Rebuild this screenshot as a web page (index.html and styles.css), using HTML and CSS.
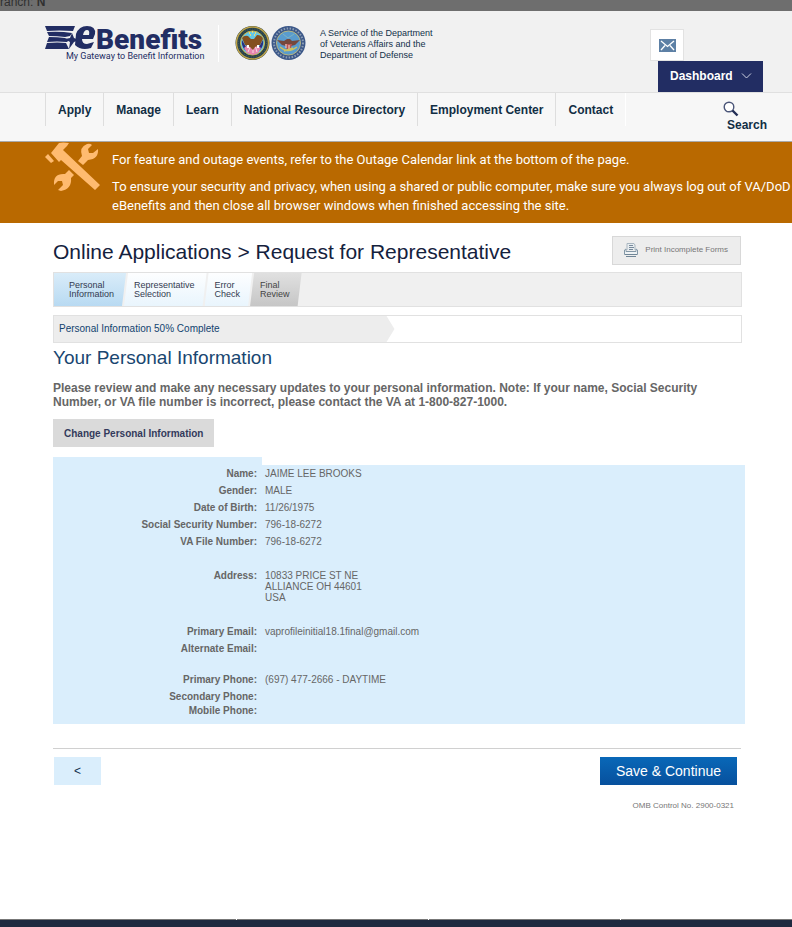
FILE: index.html
```
<!DOCTYPE html>
<html lang="en">
<head>
<meta charset="utf-8">
<title>eBenefits - Request for Representative</title>
<link rel="stylesheet" href="styles.css">
</head>
<body>
<div class="env-bar"><span>ranch: <b>N</b></span></div>
<header class="masthead">
  <a class="brand" href="#">
    <svg width="160" height="38" viewBox="0 0 160 38" role="img" aria-label="eBenefits, My Gateway to Benefit Information">
      <g fill="#222d63">
        <path d="M0 1H30L28 6Q14 5 2 6ZM2 7Q15 6 27 8L25 11L20 12Q12 11 4 11ZM4 12Q13 12 20 13L24 15L22 17Q12 16 2 17ZM2 18Q13 17 21 18L24 24H0Z"/>
        <path d="M27 8L29 13L34 15L29 17L24 24L25 17L20 14L25 13Z"/>
        <path fill-rule="evenodd" d="M30 20L31 9Q34 1 42 1Q51 1 50 9L48 14H37Q37 19 42 19L49 17L46 23Q36 26 30 20ZM38 10H44Q45 5 42 5Q39 5 38 10Z"/>
        <text class="word" x="51" y="24">Benefits</text>
        <text class="tagline" x="21" y="34">My Gateway to Benefit Information</text>
      </g>
    </svg>
  </a>
  <div class="seals">
    <svg width="35" height="36" viewBox="0 0 35 36" aria-hidden="true">
      <circle cx="17.500" cy="18" r="17" fill="#29434b"/>
      <circle cx="17.500" cy="18" r="16" fill="none" stroke="#c0a448" stroke-width="1.500"/>
      <circle cx="17.500" cy="18" r="14" fill="none" stroke="#4d6360" stroke-width="1" stroke-dasharray="1 1.500"/>
      <circle cx="17.500" cy="18" r="12" fill="#65c8e5" stroke="#d1b347"/>
      <path d="M7 15L14 27L10 25Q6 21 7 15M28 15L21 27L25 25Q29 21 28 15" fill="#282f83"/>
      <path d="M9 23L17 17L26 23L23 28L18 30L12 28Z" fill="#e785ae"/>
      <path d="M13 27L16 20M18 28V19M22 27L20 20" stroke="#f5dce3"/>
      <path d="M7 13Q9 10 13 11L16 14L19 14L22 10Q27 10 28 14L25 20L20 22L18 25L15 22L10 20Z" fill="#84501f"/>
      <path d="M14 8h1M17 7h1M20 8h1M15 10h1M19 10h1" stroke="#e6dc75" stroke-width="2"/>
      <path d="M12 20h2v3h-2zM22 20h2v3h-2z" fill="#fff"/>
    </svg>
    <svg width="35" height="36" viewBox="0 0 35 36" aria-hidden="true">
      <circle cx="17.500" cy="18" r="17" fill="#3b5788"/>
      <circle cx="17.500" cy="18" r="14.500" fill="none" stroke="#8c9db5" stroke-width="2" stroke-dasharray="1.500 1.500"/>
      <circle cx="17.500" cy="18" r="12" fill="#599bce" stroke="#b7b680"/>
      <path d="M6 15L13 16L16 14H19L21 16L29 15L24 20L20 21L18 24L15 21L11 20Z" fill="#76483d"/>
      <path d="M14 19H21L20 23L17 25L15 23Z" fill="#b95451"/>
      <path d="M15 19v4M18 20v4" stroke="#efdedb"/>
      <path d="M9 22Q17 29 26 22M13 26L22 23" fill="none" stroke="#cbc365" stroke-width="1.500"/>
      <path d="M12 9L17 13L23 9" fill="none" stroke="#7fb4c0"/>
    </svg>
  </div>
  <p class="service">A Service of the Department<br>of Veterans Affairs and the<br>Department of Defense</p>
  <div class="account">
    <a class="mail" href="#" aria-label="Messages">
      <svg width="17" height="13" viewBox="0 0 17 13" aria-hidden="true"><path fill="#5d80a5" d="M0 0H17V13H0Z"/><path d="M2 2L8.500 7.500L15 2M2 11L6 6.500M15 11L11 6.500" fill="none" stroke="#fff" stroke-width="1.300"/></svg>
    </a>
    <button class="dashboard" type="button">Dashboard
      <svg width="11" height="6" viewBox="0 0 11 6" aria-hidden="true"><path d="M1 .5L5.500 5L10 .5" fill="none" stroke="#cdd1e2"/></svg>
    </button>
  </div>
</header>
<nav class="main-nav">
  <ul>
    <li><a href="#">Apply</a></li>
    <li><a href="#">Manage</a></li>
    <li><a href="#">Learn</a></li>
    <li><a href="#">National Resource Directory</a></li>
    <li><a href="#">Employment Center</a></li>
    <li><a href="#">Contact</a></li>
  </ul>
  <a class="search" href="#">
    <svg width="16" height="16" viewBox="0 0 16 16" aria-hidden="true"><circle cx="6" cy="6" r="4.800" fill="#fff" stroke="#4a5578" stroke-width="1.400"/><path d="M9.500 9.500L14.500 14.500" stroke="#222d55" stroke-width="2.400"/></svg>
    <span>Search</span>
  </a>
</nav>
<aside class="notice">
  <svg width="56" height="50" viewBox="0 0 56 50" aria-hidden="true">
    <g fill="#ffbb70">
      <path d="M14 1Q18 0 24 1L22 4L18 8L55 43L50 48L16 18L14 20L6 11Z"/>
      <path d="M3 12L9 19L6 21L0 15Z"/>
      <path d="M33 19L37 14Q34 5 42 2Q45 1 47 3L43 7L44 11L48 11L53 7Q54 17 43 18L38 23Z"/>
      <path d="M24 28L29 33L26 36Q27 47 16 49L13 48L18 43L17 39L13 39L9 43Q8 31 20 32Z"/>
    </g>
  </svg>
  <div>
    <p>For feature and outage events, refer to the Outage Calendar link at the bottom of the page.</p>
    <p>To ensure your security and privacy, when using a shared or public computer, make sure you always log out of VA/DoD eBenefits and then close all browser windows when finished accessing the site.</p>
  </div>
</aside>
<main>
  <div class="title-row">
    <h1>Online Applications &gt; Request for Representative</h1>
    <button class="print" type="button">
      <svg width="14" height="14" viewBox="0 0 14 14" aria-hidden="true"><path d="M3 7V.5H10L11 2V7" fill="#e8edf0" stroke="#a9b6c0"/><path d="M5 2.500H9M5 4.500H10M5 6.500H9" stroke="#77899b"/><path d="M.5 11.500V7L2 6V8.500H12V6L13.500 7V11.500Z" fill="#eef2f4" stroke="#8498a7"/><path d="M1 11.500H13M2 13.500H12" stroke="#708697"/></svg>
      Print Incomplete Forms
    </button>
  </div>
  <ol class="steps">
    <li class="current">Personal<br>Information</li>
    <li>Representative<br>Selection</li>
    <li>Error<br>Check</li>
    <li class="last">Final<br>Review</li>
  </ol>
  <div class="progress"><span>Personal Information 50% Complete</span></div>
  <h2>Your Personal Information</h2>
  <p class="intro">Please review and make any necessary updates to your personal information. Note: If your name, Social Security Number, or VA file number is incorrect, please contact the VA at 1-800-827-1000.</p>
  <button class="change" type="button">Change Personal Information</button>
  <div class="details">
    <table>
      <tbody>
        <tr><th scope="row">Name:</th><td>JAIME LEE BROOKS</td></tr>
        <tr><th scope="row">Gender:</th><td>MALE</td></tr>
        <tr><th scope="row">Date of Birth:</th><td>11/26/1975</td></tr>
        <tr><th scope="row">Social Security Number:</th><td>796-18-6272</td></tr>
        <tr class="group-end"><th scope="row">VA File Number:</th><td>796-18-6272</td></tr>
        <tr class="group-end"><th scope="row">Address:</th><td>10833 PRICE ST NE<br>ALLIANCE OH 44601<br>USA</td></tr>
        <tr><th scope="row">Primary Email:</th><td>vaprofileinitial18.1final@gmail.com</td></tr>
        <tr class="email-end"><th scope="row">Alternate Email:</th><td></td></tr>
        <tr><th scope="row">Primary Phone:</th><td>(697) 477-2666 - DAYTIME</td></tr>
        <tr><th scope="row">Secondary Phone:</th><td></td></tr>
        <tr class="mobile"><th scope="row">Mobile Phone:</th><td></td></tr>
      </tbody>
    </table>
  </div>
  <div class="actions">
    <button class="back" type="button" aria-label="Back">&lt;</button>
    <button class="save" type="button">Save &amp; Continue</button>
  </div>
  <p class="omb">OMB Control No. 2900-0321</p>
</main>
<footer><i></i><i></i><i></i></footer>
</body>
</html>
```
FILE: styles.css
```
* { box-sizing: border-box; }
body {
  margin: 0;
  min-height: 100vh;
  display: flex;
  flex-direction: column;
  background: #fff;
  color: #666;
  font-family: "Liberation Sans", Arial, sans-serif;
}
h1, h2, p, ul, ol { margin: 0; padding: 0; }
ul, ol { list-style: none; }
a { color: inherit; text-decoration: none; }
button { border: 0; border-radius: 0; font-family: inherit; cursor: pointer; }
svg { display: block; flex: none; overflow: visible; }

.env-bar {
  height: 11px;
  overflow: hidden;
  background: #6e6e6e;
  color: #303030;
  font-size: 12px;
  line-height: 4px;
}

.masthead {
  display: flex;
  align-items: flex-start;
  height: 82px;
  padding: 14px 29px 0 45px;
  border-bottom: 1px solid #e0e0e0;
  background: #f1f1f1;
}
.word { font: 900 28px Roboto, sans-serif; }
.tagline { font: 400 9px Roboto, sans-serif; }
.brand { height: 37px; padding-right: 13px; border-right: 1px solid #fff; }
.seals { display: flex; gap: 1px; margin-left: 16px; }
.service {
  margin: 3px 0 0 14px;
  color: #12304a;
  font-size: 9px;
  line-height: 11px;
}
.account { width: 113px; margin: 4px 0 0 auto; }
.mail {
  display: flex;
  align-items: center;
  justify-content: center;
  width: 34px;
  height: 32px;
  border: 1px solid #e2e2e2;
  background: #fff;
}
.dashboard {
  display: flex;
  align-items: center;
  gap: 8px;
  width: 105px;
  height: 31px;
  margin-left: 8px;
  padding: 0 12px 2px;
  background: #222d63;
  color: #fff;
  font-size: 12px;
  font-weight: bold;
}

.main-nav {
  display: flex;
  justify-content: space-between;
  height: 49px;
  padding: 0 25px 0 45px;
  border-bottom: 1px solid #aaa;
  background: #f7f7f7;
  color: #112e44;
  font-size: 12px;
  font-weight: bold;
}
.main-nav ul { display: flex; border-right: 1px solid #fff; height: 33px; }
.main-nav li { border-left: 1px solid #dedede; padding: 0 12px; line-height: 34px; }
.search { padding-top: 8px; line-height: 16px; }
.search span { display: block; padding-left: 4px; }

.notice {
  display: flex;
  gap: 11px;
  padding: 0 0 8px 45px;
  background: #b96900;
  color: #fff;
  font: 400 13px/19px Roboto, Arial, sans-serif;
}
.notice p { margin-top: 8px; }

main { flex: 1; padding: 13px 50px 24px 53px; }
.title-row { display: flex; justify-content: space-between; }
h1 { color: #14213d; font-size: 21px; font-weight: normal; line-height: 32px; }
.print {
  display: flex;
  align-items: center;
  gap: 7px;
  height: 29px;
  margin-right: 1px;
  padding: 0 12px 2px 11px;
  border: 1px solid #d8d8d8;
  background: #ededed;
  color: #777;
  font-size: 8px;
}

.steps {
  display: flex;
  height: 35px;
  margin-top: 4px;
  border: 1px solid #e1e1e1;
  background: #f0f0f0;
  color: #333a50;
  font-size: 9px;
  line-height: 9px;
}
.steps li {
  margin-left: -2px;
  padding: 8px 12px 0 10px;
  background: linear-gradient(#fdfeff, #e9f5fd);
  clip-path: polygon(4px 0, 100% 0, calc(100% - 4px) 100%, 0 100%);
}
.steps .current {
  margin-left: 0;
  padding-left: 15px;
  background: linear-gradient(#d9ecf9, #b8daf2);
  clip-path: polygon(0 0, 100% 0, calc(100% - 4px) 100%, 0 100%);
}
.steps .last { background: linear-gradient(#e0e0e0, #c6c6c6); color: #444; }

.progress { height: 28px; margin-top: 8px; border: 1px solid #e1e1e1; }
.progress span {
  display: block;
  width: calc(50% - 3px);
  height: 100%;
  padding-left: 5px;
  background: #ededed;
  clip-path: polygon(0 0, calc(100% - 8px) 0, 100% 50%, calc(100% - 8px) 100%, 0 100%);
  color: #12436f;
  font-size: 10px;
  line-height: 26px;
}
h2 { color: #194670; font-size: 19px; font-weight: normal; line-height: 29px; }
.intro { margin-top: 9px; font-size: 12px; font-weight: bold; line-height: 14px; }
.change {
  display: block;
  height: 28px;
  margin-top: 10px;
  padding: 0 11px;
  background: #dadada;
  color: #333a5c;
  font-size: 10px;
  font-weight: bold;
}

.details { margin: 10px -3px 0 0; }
.details::before { content: ""; display: block; width: 209px; height: 8px; background: #daeefc; }
table {
  width: 100%;
  border-collapse: collapse;
  background: #daeefc;
  font-size: 10px;
  line-height: 11px;
}
th, td { padding: 3px 0; vertical-align: top; }
th { width: 204px; text-align: right; }
td { padding-left: 8px; }
.group-end > * { padding-bottom: 20px; }
.email-end > * { padding-bottom: 17px; }
.mobile > * { padding: 0 0 8px; }

.actions {
  display: flex;
  justify-content: space-between;
  margin: 24px 1px 0 0;
  padding: 8px 4px 0 1px;
  border-top: 1px solid #d0d0d0;
}
.back { width: 47px; height: 28px; background: #daeefc; color: #14304f; font-size: 12px; }
.save {
  height: 28px;
  padding: 0 16px;
  background: linear-gradient(#0968b8, #07509d);
  color: #fff;
  font-size: 14px;
}
.omb { margin: 16px 8px 0 0; font-size: 8px; line-height: 10px; text-align: right; color: #777; }

footer {
  display: flex;
  justify-content: center;
  height: 8px;
  padding-left: 64px;
  border-top: 1px solid #777;
  background: #1f2a40;
}
footer i { width: 192px; height: 1px; margin-top: -1px; border-left: 1px solid #fff; }
footer i:last-child { width: 1px; }
```
